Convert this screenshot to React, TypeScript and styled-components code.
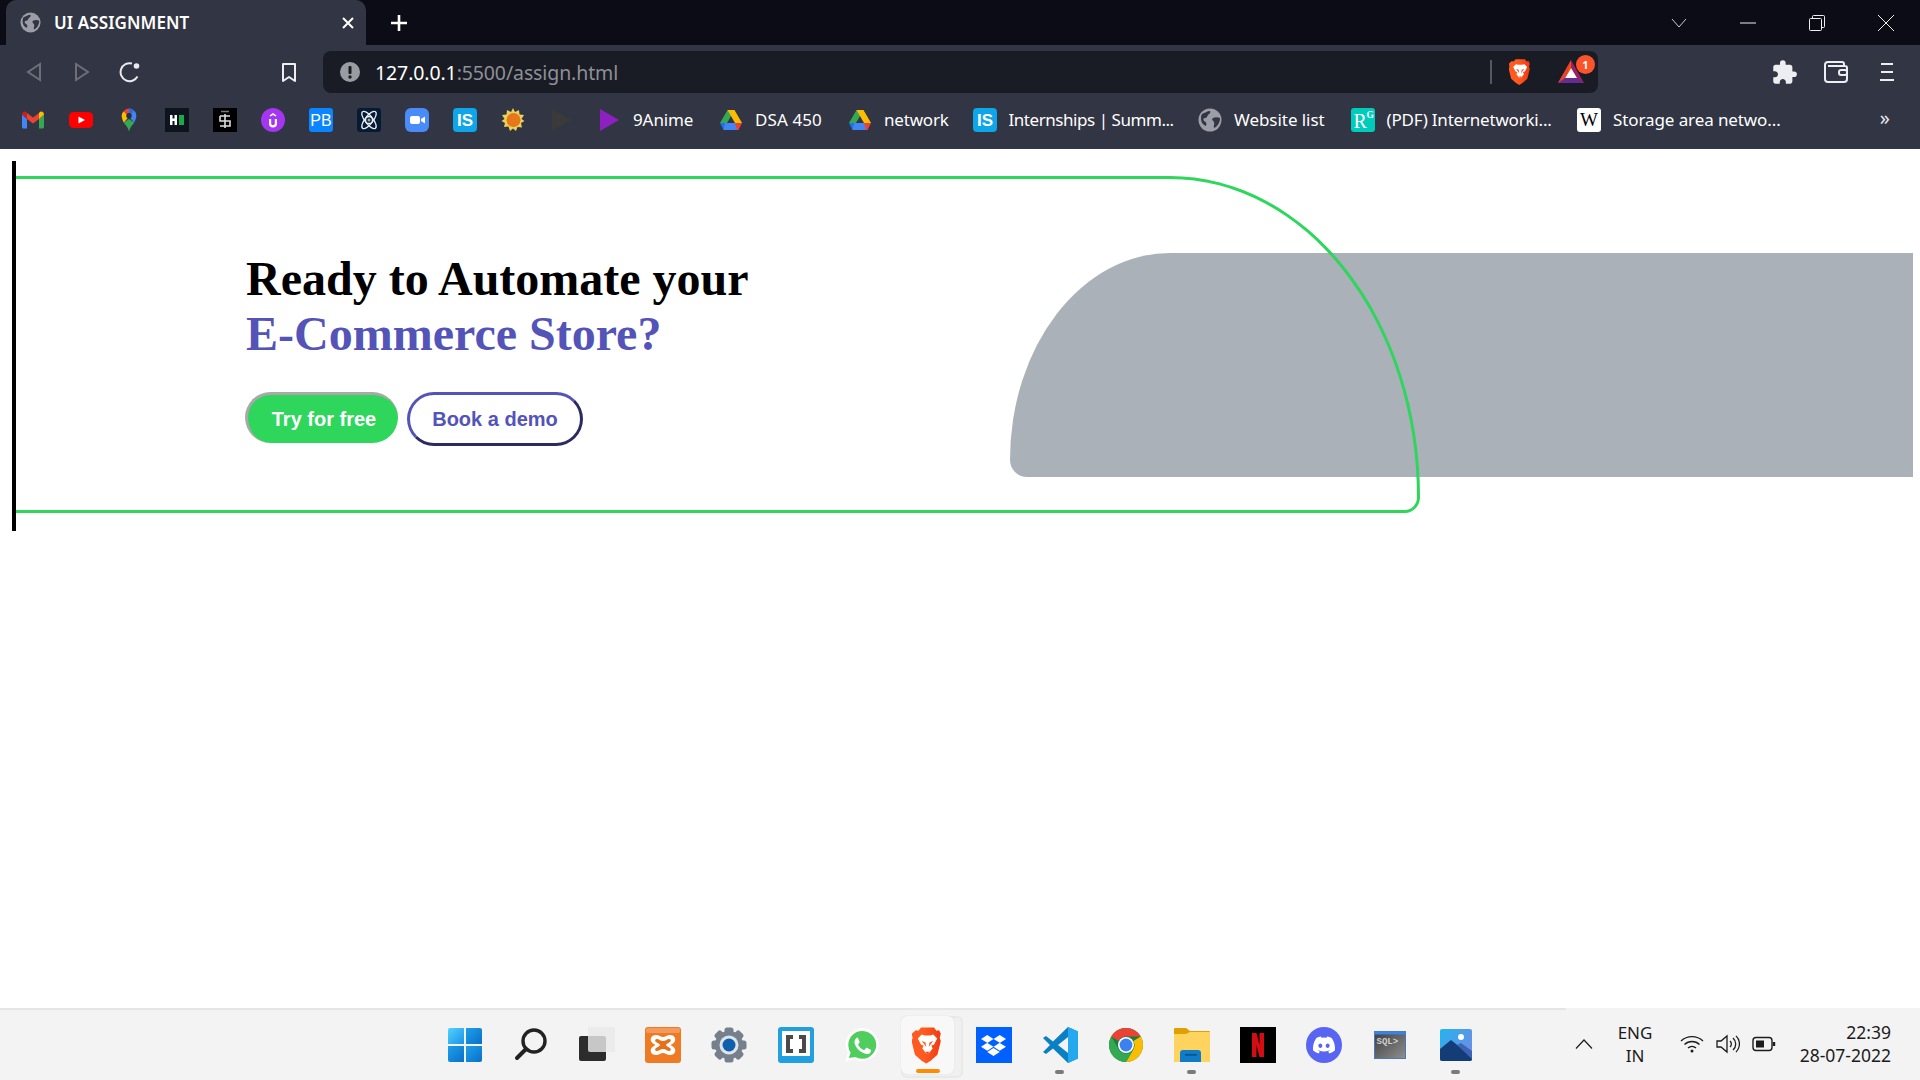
import React from 'react';
import styled, { createGlobalStyle } from 'styled-components';
import { FaDiscord, FaDropbox } from 'react-icons/fa';
import { MdExtension } from 'react-icons/md';

const UI_FONT = '"Noto Sans", "Open Sans", sans-serif';

const GlobalStyle = createGlobalStyle`
  html, body {
    margin: 0;
    padding: 0;
    background: #fff;
    overflow: hidden;
  }
  * { box-sizing: border-box; }
`;

/* ---------- small drawn icons ---------- */

const Globe = ({ size = 24, cut = '#323543' }: { size?: number; cut?: string }) => (
  <svg width={size} height={size} viewBox="0 0 24 24">
    <circle cx="12" cy="12" r="11.5" fill="#9b9ea6" />
    <path d="M4 6c3-1 5-3 8-3 1 2-1 3-2 4s-1 3-3 3-2 2-1 3c2 1 3 2 2 5-3-1-5-4-5-7 0-2 0-3 1-5z" fill={cut} />
    <path d="M15 10c2-1 5-1 7 0 0 4-2 8-6 10-1-2 1-4 0-6s-3-2-1-4z" fill={cut} />
  </svg>
);

const BraveLion = ({ size = 26 }: { size?: number }) => (
  <svg width={size * 0.86} height={size * 1.04} viewBox="0 0 24 24" preserveAspectRatio="none">
    <defs>
      <linearGradient id="braveFill" x1="0" y1="0" x2="1" y2="0">
        <stop offset="0.45" stopColor="#ff5a1f" />
        <stop offset="1" stopColor="#f03a10" />
      </linearGradient>
    </defs>
    <path d="M7 1h10l2 2 2-.3 1.300 2.300-.8 2.500.8 2.200-2.600 8.800-5.200 3.700-3.500 1.800-3.500-1.800-5.200-3.700-2.600-8.800.8-2.200-.8-2.500L3 2.700 5 3z" fill="url(#braveFill)" />
    <path d="M4.500 8l3-2.500 2.500.6h4l2.500-.6 3 2.500-2.500 4-2 .5 1 2-2.500 2.500-1.500 1-1.500-1L8 14.500l1-2-2-.5z" fill="#fff" />
    <path d="M10.500 16.500h3L12 18z" fill="#f03a10" />
    <path d="M7.500 9.500l3 1 .5 3zM16.500 9.500l-3 1-.5 3z" fill="#f7622b" />
  </svg>
);

const BatTriangle = () => (
  <svg width="28" height="26" viewBox="0 0 28 26">
    <path d="M14 1 27 24H1z" fill="#9e1f63" />
    <path d="M1 24l7-5h12l7 5z" fill="#662d91" />
    <path d="M14 9l6 10H8z" fill="#fff" />
    <path d="M14 1 8 19l6-10z" fill="#ff5000" />
    <path d="M14 1 1 24l7-5z" fill="#e8452c" />
  </svg>
);

const Gmail = () => (
  <svg width="24" height="24" viewBox="0 0 24 24">
    <path d="M1 6.500V19c0 .8.6 1.500 1.500 1.500H6V11z" fill="#4285f4" />
    <path d="M18 11v9.500h3.500c.9 0 1.500-.7 1.500-1.500V6.500z" fill="#34a853" />
    <path d="M6 11V5l6 4.500L18 5v6l-6 4.500z" fill="#ea4335" />
    <path d="M1 6.500C1 4 3.800 2.800 5.500 4.200L6 5v6z" fill="#c5221f" />
    <path d="M18 5l.6-.8C20.300 2.800 23 4 23 6.500L18 11z" fill="#fbbc04" />
  </svg>
);

const YouTube = () => (
  <svg width="24" height="24" viewBox="0 0 24 24">
    <rect y="4" width="24" height="16" rx="4.500" fill="#f00" />
    <path d="M9.500 8.500 16 12l-6.500 3.500z" fill="#fff" />
  </svg>
);

const Maps = () => (
  <svg width="24" height="24" viewBox="3 1.500 18 23">
    <path d="M12 24c-1-4-3.500-6-5-8.500L12 12l5 3.500C15.500 18 13 20 12 24z" fill="#34a853" />
    <path d="M5 9c0 2.500 1 4.500 2 6.500L12 10 7 4.500C5.800 5.700 5 7.200 5 9z" fill="#fbbc04" />
    <path d="M7 4.500 12 10l5-5.500C15.800 3 14 2 12 2S8.200 3 7 4.500z" fill="#ea4335" />
    <path d="M12 2c2 0 3.800.8 5 2.200L12 10z" fill="#1a73e8" />
    <path d="M17 4.200C18.300 5.500 19 7.200 19 9c0 2.500-1 4.500-2 6.500L12 10z" fill="#4285f4" />
    <circle cx="12" cy="9" r="2.600" fill="#2b2e39" />
  </svg>
);

const HackerRankBox = () => (
  <svg width="24" height="24" viewBox="0 0 24 24">
    <rect width="24" height="24" fill="#0e141e" />
    <path d="M5 7h2.500v3.500h2V7H12v10H9.500v-4h-2v4H5z" fill="#fff" />
    <rect x="14" y="7" width="5" height="10" fill="#1ba94c" />
  </svg>
);

const ScriptS = () => (
  <svg width="24" height="24" viewBox="0 0 24 24">
    <rect width="24" height="24" fill="#000" />
    <path d="M7 8h10M7 8v5h10v5H7M12 6v14" stroke="#ddd" strokeWidth="1.600" fill="none" />
    <path d="M8 3.500h8" stroke="#777" strokeWidth="1.500" />
  </svg>
);

const UdemyLike = () => (
  <svg width="24" height="24" viewBox="0 0 24 24">
    <circle cx="12" cy="12" r="12" fill="#a435f0" />
    <path d="M8 11v4.500a4 4 0 0 0 8 0V11h-2.200v4.500a1.800 1.800 0 0 1-3.600 0V11z" fill="#fff" />
    <path d="M8.500 7.500 12 5l3.500 2.500-1 1L12 7l-2.500 1.500z" fill="#fff" />
  </svg>
);

const LetterBox = ({ bg, text, color = '#fff', radius = 3, font = 'Liberation Sans', size = 15, weight = 700 }: {
  bg: string; text: string; color?: string; radius?: number; font?: string; size?: number; weight?: number;
}) => (
  <svg width="24" height="24" viewBox="0 0 24 24">
    <rect width="24" height="24" rx={radius} fill={bg} />
    <text x="12" y="17.500" textAnchor="middle" fontFamily={font} fontWeight={weight} fontSize={size} fill={color}>{text}</text>
  </svg>
);

const ResearchGate = () => (
  <svg width="24" height="24" viewBox="0 0 24 24">
    <rect width="24" height="24" rx="3" fill="#00ccbb" />
    <text x="2.500" y="20" fontFamily="Liberation Serif" fontSize="20" fill="#fff">R</text>
    <text x="15.500" y="10" fontFamily="Liberation Serif" fontWeight="700" fontSize="9.500" fill="#fff">G</text>
  </svg>
);

const Atom = () => (
  <svg width="24" height="24" viewBox="0 0 24 24">
    <rect width="24" height="24" rx="3" fill="#071a33" />
    <g fill="none" stroke="#e8eef5" strokeWidth="1.300">
      <ellipse cx="12" cy="12" rx="4" ry="10.500" transform="rotate(-38 12 12)" />
      <ellipse cx="12" cy="12" rx="4" ry="10.500" transform="rotate(38 12 12)" />
      <ellipse cx="12" cy="12" rx="3.500" ry="3.500" />
    </g>
    <circle cx="12" cy="12" r="1.500" fill="#9aa" />
  </svg>
);

const ZoomCam = () => (
  <svg width="24" height="24" viewBox="0 0 24 24">
    <rect width="24" height="24" rx="6" fill="#4a8cf7" />
    <rect x="5" y="8" width="10" height="8" rx="2" fill="#fff" />
    <path d="M16 11l4-2.500v7L16 13z" fill="#fff" />
  </svg>
);

const Sun = () => (
  <svg width="24" height="24" viewBox="0 0 24 24">
    <path d="M12 0l2 4 4-2 .5 4.500L23 7l-2.500 4 3 2-3.500 2 1 4.500-4.500-.5L15 23l-3-2.500L9 23l-1.500-4.500L3 19l1-4-3.500-2 3-2L1 7l4.500-.5L6 2l4 2z" fill="#e9d25a" />
    <circle cx="12.500" cy="12" r="7" fill="#e8761b" />
  </svg>
);

const PlayMark = ({ color }: { color: string }) => (
  <svg width="24" height="24" viewBox="0 0 24 24">
    <path d="M3 1l19 11L3 23z" fill={color} />
  </svg>
);

const Drive = () => (
  <svg width="24" height="24" viewBox="0 0 24 24">
    <path d="M8.500 2h7l-7.500 13H1z" fill="#34a853" />
    <path d="M15.500 2 23 15h-7L8.500 2z" fill="#fbbc04" />
    <path d="M1 15h7l-.5 7H4.500z" fill="#1a73e8" />
    <path d="M6 15h12l1.500 7h-15z" fill="#4285f4" />
    <path d="M16 15h7l-3.500 7H18z" fill="#ea4335" />
  </svg>
);

/* ---------- taskbar art ---------- */

const WindowsLogo = () => (
  <svg width="36" height="36" viewBox="0 0 36 36">
    <defs>
      <linearGradient id="winA" x1="0" y1="0" x2="1" y2="1">
        <stop offset="0" stopColor="#52d2ff" />
        <stop offset="1" stopColor="#1a93e6" />
      </linearGradient>
      <linearGradient id="winB" x1="0" y1="0" x2="1" y2="1">
        <stop offset="0" stopColor="#1da0ea" />
        <stop offset="1" stopColor="#0a6fc9" />
      </linearGradient>
    </defs>
    <path d="M1 3a2 2 0 0 1 2-2h14v16H1z" fill="url(#winA)" />
    <path d="M19 1h14a2 2 0 0 1 2 2v14H19z" fill="url(#winB)" />
    <path d="M1 19h16v16H3a2 2 0 0 1-2-2z" fill="url(#winB)" />
    <path d="M19 19h16v14a2 2 0 0 1-2 2H19z" fill="url(#winB)" />
  </svg>
);

const SearchGlass = () => (
  <svg width="36" height="36" viewBox="0 0 36 36" fill="none" stroke="#222" strokeWidth="3.400" strokeLinecap="round">
    <circle cx="21" cy="14" r="11" />
    <path d="M13 22l-9 9" strokeWidth="4" />
  </svg>
);

const TaskView = () => (
  <svg width="36" height="36" viewBox="0 0 36 36">
    <rect x="0" y="9" width="27" height="25" rx="2" fill="#2c2c2c" />
    <rect x="9" y="0" width="27" height="25" rx="2" fill="#e9e9e9" fillOpacity="0.82" />
  </svg>
);

const Xampp = () => (
  <svg width="36" height="36" viewBox="0 0 36 36">
    <rect width="36" height="36" rx="3" fill="#ef7a24" />
    <rect x="1" y="1" width="34" height="5" rx="2" fill="#f59a5c" />
    <path d="M11 8c-4 0-6 3-5 6 .6 2 3 3 4.500 4C9 19 6.500 20 6 22c-1 3 1 6 5 6 3 0 4.500-2 7-2s4 2 7 2c4 0 6-3 5-6-.5-2-3-3-4.500-4 1.500-1 3.900-2 4.500-4 1-3-1-6-5-6-3 0-4.500 2-7 2s-4-2-7-2z" fill="#fff" />
    <path d="M12 12c-2 0-2.500 2-1 3s4 2 4 3-2.500 2-4 3-1 3 1 3 3-2 6-2 4 2 6 2 2.500-2 1-3-4-2-4-3 2.500-2 4-3 1-3-1-3-3 2-6 2-4-2-6-2z" fill="#e8701b" />
  </svg>
);

const Gear = () => (
  <svg width="36" height="36" viewBox="0 0 36 36">
    {[0, 45, 90, 135].map((deg) => (
      <rect key={deg} x="13.500" y="0.500" width="9" height="35" rx="2.500" fill="#76808c" transform={`rotate(${deg} 18 18)`} />
    ))}
    <circle cx="18" cy="18" r="14" fill="#76808c" />
    <circle cx="18" cy="18" r="9.500" fill="#dfe4e9" />
    <circle cx="18" cy="18" r="6.500" fill="#0f5fb0" />
  </svg>
);

const Brackets = () => (
  <svg width="36" height="36" viewBox="0 0 36 36">
    <rect width="36" height="36" rx="3" fill="#21a0e0" />
    <rect x="4" y="4" width="28" height="25" fill="#fff" />
    <path d="M15 8H8v18h7v-4h-3V12h3zM21 8h7v18h-7v-4h3V12h-3z" fill="#4a4a4a" />
  </svg>
);

const WhatsApp = () => (
  <svg width="36" height="36" viewBox="0 0 24 24">
    <path d="M1 23l1.600-5.700A11 11 0 1 1 7 21.500z" fill="#fff" />
    <path d="M3.300 20.700l1.100-3.700A9.300 9.300 0 1 1 7.600 20z" fill="#4fce5d" />
    <path d="M8.600 7c.3 0 .6 0 .8.500l1 2.300c.1.300 0 .5-.1.700l-.7.900c-.2.200-.2.400-.1.600.8 1.500 2 2.600 3.600 3.300.2.100.4.100.6-.1l.9-1.100c.2-.3.500-.3.700-.2l2.200 1.100c.3.200.5.300.5.500 0 .9-.3 1.600-1 2.100-.8.500-1.700.6-2.700.3-3.400-1-6-3.400-7.100-6.500-.5-1.600-.1-3 .9-3.900.2-.2.500-.4.900-.5z" fill="#fff" />
  </svg>
);

const DropboxTile = styled.span`
  display: flex;
  width: 36px;
  height: 36px;
  align-items: center;
  justify-content: center;
  background: #0061fe;
  color: #fff;
  font-size: 25px;
`;

const VsCode = () => (
  <svg width="36" height="36" viewBox="0 0 36 36">
    <path d="M26 0l10 4.500v27L26 36 11 21.500 4 27l-3-2 7-7-7-7 3-2 7 5.500z" fill="#0a7fc4" />
    <path d="M26 0l10 4.500v27L26 36z" fill="#25a9ee" />
    <path d="M26 10v16l-10-8z" fill="#f3f3f3" />
  </svg>
);

const ChromeLogo = () => (
  <svg width="34" height="34" viewBox="0 0 34 34">
    <circle cx="17" cy="17" r="17" fill="#188038" />
    <path d="M17 0a17 17 0 0 1 14.700 8.500H17a8.500 8.500 0 0 0-7.500 4.500L2.300 8.500A17 17 0 0 1 17 0z" fill="#ea4335" />
    <path d="M31.700 8.500A17 17 0 0 1 17 34l7.400-12.700A8.500 8.500 0 0 0 24.400 13z" fill="#fbbc04" />
    <path d="M2.300 8.500A17 17 0 0 0 0 17a17 17 0 0 0 17 17l7.400-12.700A8.500 8.500 0 0 1 9.500 21z" fill="#34a853" />
    <circle cx="17" cy="17" r="8" fill="#fff" />
    <circle cx="17" cy="17" r="6.400" fill="#3b82f0" />
  </svg>
);

const FolderIcon = () => (
  <svg width="36" height="36" viewBox="0 0 36 36">
    <path d="M0 2a1 1 0 0 1 1-1h11l4 3h19a1 1 0 0 1 1 1v4H0z" fill="#e0a000" />
    <path d="M0 7h12l4-2h19.500a.5.5 0 0 1 .5.500V35H0z" fill="#ffd45e" />
    <path d="M6 35V26a3 3 0 0 1 3-3h15a3 3 0 0 1 3 3v9z" fill="#0f7cc9" />
    <rect x="11" y="27" width="12" height="1.600" fill="#0a4f85" />
  </svg>
);

const NetflixTile = () => (
  <svg width="36" height="36" viewBox="0 0 36 36">
    <rect width="36" height="36" fill="#000" />
    <path d="M12 6h4.500l3 12V6H24v24h-4.500L16.500 18v12H12z" fill="#d40d12" />
  </svg>
);

const DiscordTile = styled.span`
  display: flex;
  width: 36px;
  height: 36px;
  align-items: center;
  justify-content: center;
  border-radius: 50%;
  background: #5865f2;
  color: #fff;
  font-size: 24px;
`;

const SqlTile = () => (
  <svg width="32" height="28" viewBox="0 0 32 28">
    <defs>
      <linearGradient id="sqlFill" x1="0" y1="0" x2="1" y2="1">
        <stop offset="0" stopColor="#3d3d3d" />
        <stop offset="1" stopColor="#8f8f8f" />
      </linearGradient>
    </defs>
    <rect x="0.500" y="0.500" width="31" height="27" fill="url(#sqlFill)" stroke="#4a78bd" />
    <rect x="0.500" y="0.500" width="31" height="3" fill="#3c82e6" />
    <text x="2.500" y="12.500" fontFamily="Liberation Mono" fontWeight="700" fontSize="9" fill="#cfcfcf">SQL&gt;</text>
  </svg>
);

const PhotosTile = () => (
  <svg width="32" height="32" viewBox="0 0 32 32">
    <defs>
      <linearGradient id="skyFill" x1="0" y1="0" x2="1" y2="0.600">
        <stop offset="0" stopColor="#22b4ee" />
        <stop offset="1" stopColor="#6a8fe6" />
      </linearGradient>
    </defs>
    <rect width="32" height="32" rx="2" fill="url(#skyFill)" />
    <circle cx="21" cy="8" r="3" fill="#fff" />
    <path d="M0 20l11-9 21 17v2a2 2 0 0 1-2 2H2a2 2 0 0 1-2-2z" fill="#143d78" />
    <path d="M17 16l4-2 11 8v8z" fill="#3f63b4" />
  </svg>
);

/* ---------- browser chrome ---------- */

const Page = styled.div`
  display: flex;
  flex-direction: column;
  width: 1920px;
  height: 1080px;
  overflow: hidden;
  font-family: ${UI_FONT};
`;

const TabStrip = styled.div`
  display: flex;
  align-items: center;
  height: 45px;
  padding-left: 6px;
  background: #0b0c15;
  color: #fff;
`;

const Tab = styled.div`
  display: flex;
  align-items: center;
  width: 360px;
  height: 45px;
  padding: 0 11px 0 14px;
  gap: 13px;
  border-radius: 10px 10px 0 0;
  background: #323543;
`;

const TabTitle = styled.span`
  flex: 1;
  font-size: 17px;
  font-weight: 600;
  letter-spacing: 0.1px;
`;

const NewTab = styled.div`
  display: flex;
  margin-left: 23px;
`;

const WindowControls = styled.div`
  display: flex;
  margin-left: auto;
`;

const WindowControl = styled.div`
  display: flex;
  width: 69px;
  height: 45px;
  align-items: center;
  justify-content: center;
`;

const Toolbar = styled.div`
  display: flex;
  align-items: center;
  height: 54px;
  padding: 0 8px 0 10px;
  background: #323543;
`;

const ToolButton = styled.div<{ $wide?: boolean }>`
  display: flex;
  flex: none;
  width: ${(p) => (p.$wide ? 51 : 48)}px;
  height: 42px;
  align-items: center;
  justify-content: center;
`;

const BookmarkSlot = styled(ToolButton)`
  margin: 0 10px 0 111px;
`;

const AddressBar = styled.div`
  display: flex;
  align-items: center;
  width: 1275px;
  height: 42px;
  padding: 0 13px 0 17px;
  border-radius: 8px;
  background: #191c24;
`;

const Url = styled.span`
  flex: 1;
  margin-left: 15px;
  font-size: 19.5px;
  letter-spacing: -0.11px;
  color: #8e9098;

  b {
    font-weight: 400;
    color: #fff;
  }
`;

const AddressDivider = styled.span`
  width: 2px;
  height: 24px;
  margin-right: 17px;
  background: #55585f;
`;

const ShieldSlot = styled.span`
  display: flex;
  margin-right: 26px;
`;

const RewardsSlot = styled.span`
  position: relative;
  display: flex;
`;

const Badge = styled.span`
  position: absolute;
  top: -4px;
  right: -10px;
  display: flex;
  width: 19px;
  height: 19px;
  align-items: center;
  justify-content: center;
  border-radius: 50%;
  background: #fb542b;
  color: #fff;
  font-size: 11px;
  font-weight: 700;
`;

const ToolActions = styled.div`
  display: flex;
  margin-left: auto;
  color: #eceef2;
  font-size: 27px;
`;

const BookmarkBar = styled.div`
  display: flex;
  height: 50px;
  padding: 9px 0 0 9px;
  background: #323543;
`;

const Bookmark = styled.div`
  display: flex;
  flex: none;
  height: 24px;
  align-items: center;
  padding: 0 12px;
  gap: 12px;
  color: #fff;
  font-size: 17px;
  white-space: nowrap;

  svg { flex: none; }
`;

const BookmarkLabel = styled.span<{ $width: number; $track: number }>`
  width: ${(p) => p.$width}px;
  margin-bottom: 2px;
  letter-spacing: ${(p) => p.$track}px;
`;

const MoreBookmarks = styled.span`
  margin-left: auto;
  padding-right: 30px;
  color: #e6e7ea;
  font-size: 20px;
  line-height: 20px;
`;

/* ---------- hero ---------- */

const Main = styled.main`
  flex: 1;
  background: #fff;
`;

const Hero = styled.section`
  position: relative;
  width: 1408px;
  margin: 12px 0 0 12px;
  padding: 15px 0 18px 0;
  border-left: 4px solid #000;
`;

const Backdrop = styled.div`
  position: absolute;
  top: 92px;
  left: 994px;
  width: 903px;
  height: 224px;
  border-radius: 160px 0 0 17px / 207px 0 0 17px;
  background: #abb1b9;
`;

const Frame = styled.div`
  position: relative;
  height: 337px;
  padding: 72px 0 0 230px;
  border: solid #2ed65c;
  border-width: 3px 3px 3px 0;
  border-top-right-radius: 250px 321px;
  border-bottom-right-radius: 15px 16px;
`;

const Headline = styled.h1`
  margin: 0 0 31px;
  font-family: "Liberation Serif", serif;
  font-size: 48px;
  font-weight: 700;
  color: #000;

  span {
    display: block;
    color: #5353b8;
  }
`;

const Actions = styled.div`
  display: flex;
  align-items: flex-start;
  margin-left: -1px;
  gap: 9px;
`;

const TryButton = styled.button`
  width: 153px;
  height: 51px;
  padding: 0 0 0 2px;
  border: solid #a9a9a9;
  border-width: 3px 0 0 3px;
  border-radius: 26px;
  background: #2ed65c;
  color: #fff;
  font-family: "Liberation Sans", sans-serif;
  font-size: 20px;
  font-weight: 700;
`;

const DemoButton = styled.button`
  width: 176px;
  height: 54px;
  padding: 0;
  border: 3px solid;
  border-color: #5353b8 #2b2b62 #2b2b62 #5353b8;
  border-radius: 27px;
  background: #fff;
  color: #5353b8;
  font-family: "Liberation Sans", sans-serif;
  font-size: 20px;
  font-weight: 700;
`;

/* ---------- taskbar ---------- */

const Taskbar = styled.footer`
  position: relative;
  display: flex;
  flex: none;
  height: 72px;
  padding-left: 432px;
  background: #f3f3f3;
  color: #1c1c1c;

  &::before {
    content: '';
    position: absolute;
    top: 0;
    left: 0;
    width: 1566px;
    height: 2px;
    background: #e5e5e5;
  }
`;

const AppSlot = styled.div<{ $active?: boolean }>`
  position: relative;
  display: flex;
  flex: none;
  width: 66.1px;
  height: 72px;
  padding-top: 2px;
  justify-content: center;
  align-items: center;

  ${(p) => p.$active && `
    &::before {
      content: '';
      position: absolute;
      top: 8px;
      left: 6px;
      width: 58px;
      height: 58px;
      border: 2px solid #e9e9e9;
      border-radius: 6px;
      background: #f0f0f0;
    }
    &::after {
      content: '';
      position: absolute;
      top: 8px;
      left: 6px;
      width: 53px;
      height: 58px;
      border-radius: 6px;
      background: #f8f8f8;
      box-shadow: 0 0 1px #ccc;
    }
    > * { position: relative; z-index: 1; }
  `}
`;

const RunDot = styled.span<{ $active?: boolean }>`
  position: absolute !important;
  z-index: 2 !important;
  top: ${(p) => (p.$active ? 61 : 62)}px;
  left: 50%;
  width: ${(p) => (p.$active ? 24 : 9)}px;
  height: 4px;
  margin-left: ${(p) => (p.$active ? -12 : -5)}px;
  border-radius: 2px;
  background: ${(p) => (p.$active ? '#ff8c00' : '#7b7b7b')};
`;

const Tray = styled.div`
  display: flex;
  align-items: center;
  margin-left: auto;
  padding-right: 29px;
`;

const TrayIcon = styled.span`
  display: flex;
  width: 36px;
  justify-content: center;
`;

const Locale = styled.div`
  width: 66px;
  margin: 0 6px 0 9px;
  font-size: 17px;
  line-height: 23px;
  text-align: center;
`;

const Clock = styled.div`
  width: 96px;
  margin-left: 13px;
  font-size: 17.5px;
  line-height: 23px;
  text-align: right;
`;

const bookmarkIcons: React.ReactNode[] = [
  <Gmail key="gmail" />,
  <YouTube key="yt" />,
  <Maps key="maps" />,
  <HackerRankBox key="hr" />,
  <ScriptS key="s" />,
  <UdemyLike key="u" />,
  <LetterBox key="pb" bg="#0a84ff" text="PB" size={16} weight={400} />,
  <Atom key="atom" />,
  <ZoomCam key="zoom" />,
  <LetterBox key="is" bg="#0ea5e9" text="IS" radius={4} size={17} />,
  <Sun key="sun" />,
  <PlayMark key="dark" color="#3a3a3a" />,
];

const linkedBookmarks: { icon: React.ReactNode; label: string; width: number; track: number }[] = [
  { icon: <PlayMark color="#8d20c0" />, label: '9Anime', width: 62, track: -0.1 },
  { icon: <Drive />, label: 'DSA 450', width: 69, track: 0.1 },
  { icon: <Drive />, label: 'network', width: 64.5, track: -0.2 },
  { icon: <LetterBox bg="#0ea5e9" text="IS" radius={4} size={17} />, label: 'Internships | Summ...', width: 165.5, track: -0.45 },
  { icon: <Globe cut="#323543" />, label: 'Website list', width: 92.5, track: -0.05 },
  { icon: <ResearchGate />, label: '(PDF) Internetworki...', width: 166.5, track: -0.2 },
  { icon: <LetterBox bg="#fff" color="#000" text="W" font="Liberation Serif" size={19} weight={400} />, label: 'Storage area netwo...', width: 168, track: -0.1 },
];

const apps: { key: string; icon: React.ReactNode; running?: boolean; active?: boolean }[] = [
  { key: 'start', icon: <WindowsLogo /> },
  { key: 'search', icon: <SearchGlass /> },
  { key: 'tasks', icon: <TaskView /> },
  { key: 'xampp', icon: <Xampp /> },
  { key: 'settings', icon: <Gear /> },
  { key: 'brackets', icon: <Brackets /> },
  { key: 'whatsapp', icon: <WhatsApp /> },
  { key: 'brave', icon: <BraveLion size={36} />, active: true },
  { key: 'dropbox', icon: <DropboxTile><FaDropbox /></DropboxTile> },
  { key: 'code', icon: <VsCode />, running: true },
  { key: 'chrome', icon: <ChromeLogo /> },
  { key: 'files', icon: <FolderIcon />, running: true },
  { key: 'netflix', icon: <NetflixTile /> },
  { key: 'discord', icon: <DiscordTile><FaDiscord /></DiscordTile> },
  { key: 'sql', icon: <SqlTile /> },
  { key: 'photos', icon: <PhotosTile />, running: true },
];

export default function App() {
  return (
    <Page>
      <GlobalStyle />
      <TabStrip>
        <Tab>
          <Globe size={21} />
          <TabTitle>UI ASSIGNMENT</TabTitle>
          <svg width="14" height="14" viewBox="0 0 14 14" stroke="#fff" strokeWidth="2"><path d="M2 2l10 10M12 2 2 12" /></svg>
        </Tab>
        <NewTab>
          <svg width="20" height="20" viewBox="0 0 20 20" stroke="#fff" strokeWidth="2.600"><path d="M10 2v16M2 10h16" /></svg>
        </NewTab>
        <WindowControls>
          <WindowControl>
            <svg width="16" height="10" viewBox="0 0 16 10" fill="none" stroke="#ccc"><path d="M1 1l7 8 7-8" /></svg>
          </WindowControl>
          <WindowControl>
            <svg width="16" height="4" viewBox="0 0 16 4" stroke="#eee"><path d="M0 2h16" /></svg>
          </WindowControl>
          <WindowControl>
            <svg width="16" height="16" viewBox="0 0 16 16" fill="none" stroke="#eee"><rect x="0.500" y="3.500" width="12" height="12" rx="1" /><path d="M3.500 3.500v-2a1 1 0 0 1 1-1h10a1 1 0 0 1 1 1v10a1 1 0 0 1-1 1h-2" /></svg>
          </WindowControl>
          <WindowControl>
            <svg width="16" height="16" viewBox="0 0 16 16" stroke="#eee"><path d="M0 0l16 16M16 0 0 16" /></svg>
          </WindowControl>
        </WindowControls>
      </TabStrip>

      <Toolbar>
        <ToolButton>
          <svg width="16" height="20" viewBox="0 0 16 20" fill="none" stroke="#6d707b" strokeWidth="2"><path d="M14 2v16L2 10z" /></svg>
        </ToolButton>
        <ToolButton>
          <svg width="16" height="20" viewBox="0 0 16 20" fill="none" stroke="#6d707b" strokeWidth="2"><path d="M2 2v16l12-8z" /></svg>
        </ToolButton>
        <ToolButton>
          <svg width="22" height="22" viewBox="0 0 22 22" fill="none" stroke="#e8e9ec" strokeWidth="2">
            <path d="M18.500 15.500A9 9 0 1 1 13 2.500" />
            <circle cx="17.500" cy="5" r="2.800" fill="#e8e9ec" stroke="none" />
          </svg>
        </ToolButton>
        <BookmarkSlot>
          <svg width="16" height="21" viewBox="0 0 16 21" fill="none" stroke="#eceef2" strokeWidth="2"><path d="M2 2h12v17l-6-4-6 4z" strokeLinejoin="round" /></svg>
        </BookmarkSlot>
        <AddressBar>
          <svg width="20" height="20" viewBox="0 0 20 20">
            <circle cx="10" cy="10" r="10" fill="#9a9ca4" />
            <rect x="8.500" y="4" width="3" height="8" rx="1" fill="#191c24" />
            <circle cx="10" cy="15" r="1.700" fill="#191c24" />
          </svg>
          <Url><b>127.0.0.1</b>:5500/assign.html</Url>
          <AddressDivider />
          <ShieldSlot><BraveLion /></ShieldSlot>
          <RewardsSlot>
            <BatTriangle />
            <Badge>1</Badge>
          </RewardsSlot>
        </AddressBar>
        <ToolActions>
          <ToolButton $wide><MdExtension /></ToolButton>
          <ToolButton $wide>
            <svg width="24" height="22" viewBox="0 0 24 22" fill="none" stroke="#eceef2" strokeWidth="2">
              <path d="M20 5V3a2 2 0 0 0-2-2H4a3 3 0 0 0-3 3v14a3 3 0 0 0 3 3h16a3 3 0 0 0 3-3V7a2 2 0 0 0-2-2H4" />
              <rect x="15" y="9" width="8" height="5" rx="2" />
            </svg>
          </ToolButton>
          <ToolButton $wide>
            <svg width="16" height="20" viewBox="0 0 16 20" stroke="#eceef2" strokeWidth="2.200"><path d="M2 2h12M2 10h12M1 18h14" /></svg>
          </ToolButton>
        </ToolActions>
      </Toolbar>

      <BookmarkBar>
        {bookmarkIcons.map((icon, i) => (
          <Bookmark key={i}>{icon}</Bookmark>
        ))}
        {linkedBookmarks.map((item) => (
          <Bookmark key={item.label}>
            {item.icon}
            <BookmarkLabel $width={item.width} $track={item.track}>{item.label}</BookmarkLabel>
          </Bookmark>
        ))}
        <MoreBookmarks>»</MoreBookmarks>
      </BookmarkBar>

      <Main>
        <Hero>
          <Backdrop />
          <Frame>
            <Headline>
              Ready to Automate your
              <span>E-Commerce Store?</span>
            </Headline>
            <Actions>
              <TryButton>Try for free</TryButton>
              <DemoButton>Book a demo</DemoButton>
            </Actions>
          </Frame>
        </Hero>
      </Main>

      <Taskbar>
        {apps.map((app) => (
          <AppSlot key={app.key} $active={app.active}>
            {app.icon}
            {app.running && <RunDot />}
            {app.active && <RunDot $active />}
          </AppSlot>
        ))}
        <Tray>
          <svg width="18" height="10" viewBox="0 0 18 10" fill="none" stroke="#1c1c1c" strokeWidth="1.200"><path d="M1 9.500l8-8.500 8 8.500" /></svg>
          <Locale>ENG<br />IN</Locale>
          <TrayIcon>
            <svg width="24" height="18" viewBox="0 0 24 18" fill="none" stroke="#1c1c1c" strokeWidth="1.400">
              <path d="M1 6a16 16 0 0 1 22 0M4.500 9.500a11 11 0 0 1 15 0M8 13a6 6 0 0 1 8 0" />
              <circle cx="12" cy="16" r="1.500" fill="#1c1c1c" stroke="none" />
            </svg>
          </TrayIcon>
          <TrayIcon>
            <svg width="24" height="20" viewBox="0 0 24 20" fill="none" stroke="#1c1c1c" strokeWidth="1.300">
              <path d="M1 7h4l6-5v16l-6-5H1zM14 7a4 4 0 0 1 0 6M17 4a8 8 0 0 1 0 12M20 2a11 11 0 0 1 0 16" />
            </svg>
          </TrayIcon>
          <TrayIcon>
            <svg width="24" height="16" viewBox="0 0 24 16" fill="none" stroke="#1c1c1c" strokeWidth="1.400">
              <rect x="1" y="1.500" width="19" height="13" rx="3" />
              <rect x="4" y="4.500" width="8" height="7" fill="#1c1c1c" stroke="none" />
              <path d="M22 6v4" strokeWidth="2.400" />
            </svg>
          </TrayIcon>
          <Clock>22:39<br />28-07-2022</Clock>
        </Tray>
      </Taskbar>
    </Page>
  );
}
